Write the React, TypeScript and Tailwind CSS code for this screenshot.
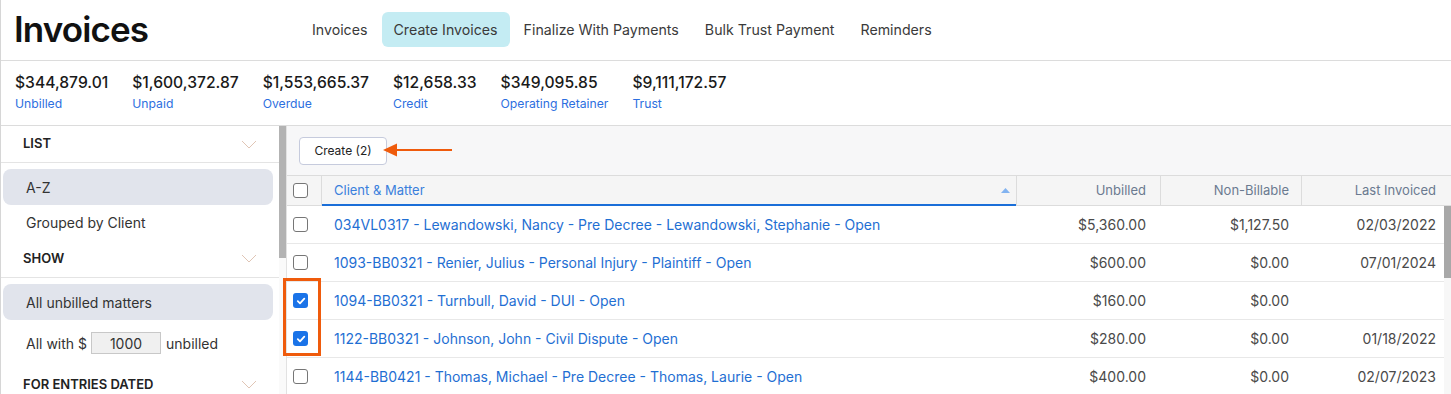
import React from "react";

const rows = [
  { text: "034VL0317 - Lewandowski, Nancy - Pre Decree - Lewandowski, Stephanie - Open", unbilled: "$5,360.00", nb: "$1,127.50", last: "02/03/2022", checked: false },
  { text: "1093-BB0321 - Renier, Julius - Personal Injury - Plaintiff - Open", unbilled: "$600.00", nb: "$0.00", last: "07/01/2024", checked: false },
  { text: "1094-BB0321 - Turnbull, David - DUI - Open", unbilled: "$160.00", nb: "$0.00", last: "", checked: true },
  { text: "1122-BB0321 - Johnson, John - Civil Dispute - Open", unbilled: "$280.00", nb: "$0.00", last: "01/18/2022", checked: true },
  { text: "1144-BB0421 - Thomas, Michael - Pre Decree - Thomas, Laurie - Open", unbilled: "$400.00", nb: "$0.00", last: "02/07/2023", checked: false },
];

const stats = [
  ["$344,879.01", "Unbilled"],
  ["$1,600,372.87", "Unpaid"],
  ["$1,553,665.37", "Overdue"],
  ["$12,658.33", "Credit"],
  ["$349,095.85", "Operating Retainer"],
  ["$9,111,172.57", "Trust"],
];

function Box({ checked }: { checked: boolean }) {
  return checked ? (
    <span className="w-[15px] h-[15px] rounded-[3px] bg-[#1a73e8] flex items-center justify-center">
      <svg width="10" height="10" viewBox="0 0 10 10">
        <path d="M1.8 5.2 L4 7.3 L8.3 2.6" stroke="white" strokeWidth="1.8" fill="none" strokeLinecap="round" strokeLinejoin="round" />
      </svg>
    </span>
  ) : (
    <span className="w-[15px] h-[15px] rounded-[3px] border border-[#767676] bg-white" />
  );
}

function Chevron() {
  return (
    <svg width="16" height="9" viewBox="0 0 16 9">
      <path d="M1 1 L8 8 L15 1" stroke="#e0c5b5" fill="none" strokeWidth="1" />
    </svg>
  );
}

function SectionHeader({ title, h }: { title: string; h: string }) {
  return (
    <div className={`flex items-center justify-between pl-[22px] pr-[22px] border-b border-[#e4e4e4] ${h}`}>
      <span className="text-[13px] font-semibold text-[#222]">{title}</span>
      <Chevron />
    </div>
  );
}

export default function App() {
  return (
    <div className="w-[1451px] h-[394px] overflow-hidden bg-white border-l border-[#d6d6d6] font-['Inter',sans-serif] text-[#333]">
      {/* Header */}
      <div className="h-[61px] border-b border-[#dcdcdc] flex items-center">
        <h1 className="pl-[13px] w-[299px] text-[35px] font-semibold tracking-tight text-[#111] leading-none -mt-[1px]">Invoices</h1>
        <nav className="flex gap-[2px] text-[14.2px] text-[#3a3a3a] -mt-[1px]">
          {["Invoices", "Create Invoices", "Finalize With Payments", "Bulk Trust Payment", "Reminders"].map((t) => (
            <span key={t} className={`px-3 h-[35px] flex items-center rounded-[6px] ${t === "Create Invoices" ? "bg-[#c4ecf3]" : ""}`}>{t}</span>
          ))}
        </nav>
      </div>

      {/* Stats */}
      <div className="h-[65px] border-b border-[#dcdcdc] flex gap-6 pl-[14px] pt-[11px]">
        {stats.map(([v, l]) => (
          <div key={l} className="flex flex-col">
            <span className="text-[15.65px] font-medium leading-[22px] text-[#1a1a1a]">{v}</span>
            <span className="text-[12.2px] leading-[16px] mt-[2px] text-[#2d6fe0]">{l}</span>
          </div>
        ))}
      </div>

      {/* Body */}
      <div className="relative flex h-[268px] overflow-hidden">
        <aside className="w-[278px] shrink-0 text-[14px] text-[#333]">
          <SectionHeader title="LIST" h="h-[37px]" />
          <div className="pt-[6px]">
            <div className="ml-[2px] mr-[6px] h-[36px] rounded-[8px] bg-[#e1e4ec] flex items-center pl-[23px]">A-Z</div>
            <div className="h-[35px] flex items-center pl-[25px]">Grouped by Client</div>
          </div>
          <SectionHeader title="SHOW" h="h-[38px]" />
          <div className="pt-[6px]">
            <div className="ml-[2px] mr-[6px] h-[36px] rounded-[8px] bg-[#e1e4ec] flex items-center pl-[23px]">All unbilled matters</div>
            <div className="h-[46px] flex items-center pl-[25px]">
              <span>All with $</span>
              <span className="ml-[4px] w-[70px] h-[22px] bg-[#f0f0f0] border border-[#c8c8c8] flex items-center justify-center">1000</span>
              <span className="ml-[5px]">unbilled</span>
            </div>
          </div>
          <SectionHeader title="FOR ENTRIES DATED" h="h-[38px]" />
        </aside>
        <div className="w-[7px] shrink-0 bg-[#fafafa]">
          <div className="h-[132px] bg-[#b3b3b3]" />
        </div>

        <main className="flex-1 border-l border-[#e2e2e2] bg-[#f7f7f8] flex flex-col">
          <div className="relative h-[49px] shrink-0 flex items-center pl-3">
            <button className="w-[88px] h-[28px] bg-white border border-[#c6cbdd] rounded-[4px] text-[12px] text-[#222]">Create (2)</button>
            <svg className="absolute left-[96px] top-[17px]" width="70" height="14" viewBox="0 0 70 14">
              <path d="M12 7 H69" stroke="#ef5b0c" strokeWidth="2" />
              <path d="M0 7 L14 0.5 L14 13.5 Z" fill="#ef5b0c" />
            </svg>
          </div>
          {/* Table header */}
          <div className="grid grid-cols-[34px_695px_144px_141px_1fr] h-[31px] shrink-0 border-t border-b border-[#dcdcdc] bg-[#f5f5f5] text-[13px]">
            <div className="flex items-center pl-[6px]"><Box checked={false} /></div>
            <div className="relative border-l border-[#dcdcdc] flex items-center pl-[12px] text-[#3a7fdc]">
              Client &amp; Matter
              <svg className="absolute right-[6px] top-[12px]" width="9" height="5" viewBox="0 0 9 5"><path d="M0 5 L4.5 0 L9 5 Z" fill="#82b3f0" /></svg>
              <div className="absolute left-0 right-0 -bottom-[1px] h-[2px] bg-[#1a6ed8]" />
            </div>
            <div className="border-l border-[#dcdcdc] flex items-center justify-end pr-[14px] text-[#6b7a90]">Unbilled</div>
            <div className="border-l border-[#dcdcdc] flex items-center justify-end pr-[12px] text-[#6b7a90]">Non-Billable</div>
            <div className="border-l border-[#dcdcdc] flex items-center justify-end pr-[15px] text-[#6b7a90]">Last Invoiced</div>
          </div>
          {/* Rows */}
          <div className="flex shrink-0 bg-white">
            <div className="flex-1">
              {rows.map((r) => (
                <div key={r.text} className="grid grid-cols-[34px_695px_144px_141px_1fr] h-[38px] border-b border-[#e8e8e8] text-[14px]">
                  <div className="flex items-center pl-[6px]"><Box checked={r.checked} /></div>
                  <div className="flex items-center pl-[13px] text-[#1f6fd3] whitespace-nowrap">{r.text}</div>
                  <div className="flex items-center justify-end pr-[14px] text-[#4a4a4a]">{r.unbilled}</div>
                  <div className="flex items-center justify-end pr-[12px] text-[#4a4a4a]">{r.nb}</div>
                  <div className="flex items-center justify-end pr-[8px] text-[#4a4a4a]">{r.last}</div>
                </div>
              ))}
            </div>
            <div className="w-[7px] bg-[#f7f7f7]">
              <div className="h-[72px] bg-[#a8a8a8]" />
            </div>
          </div>
        </main>

        {/* Annotation highlight */}
        <div className="absolute left-[282px] top-[152px] w-[38px] h-[78px] border-[3px] border-[#ef5b0c]" />
      </div>
    </div>
  );
}
